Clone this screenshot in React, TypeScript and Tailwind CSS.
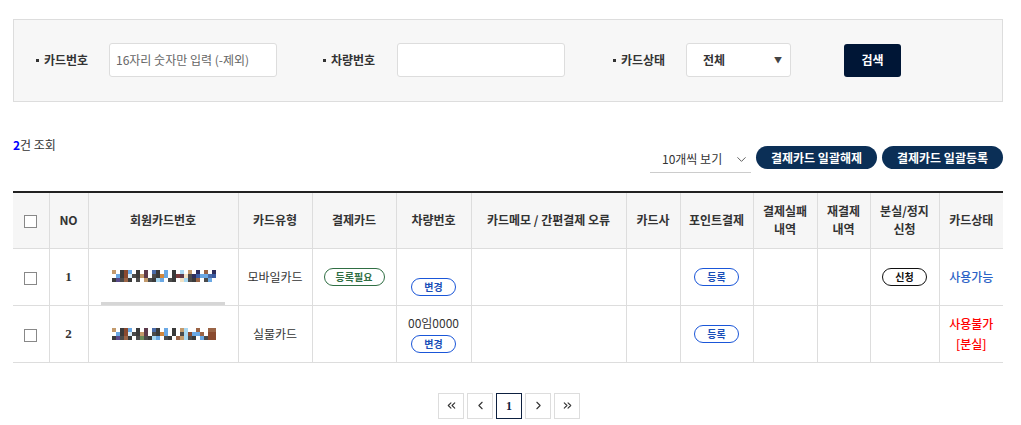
import React from "react";
import { ChevronDown, ChevronLeft, ChevronRight, ChevronsLeft, ChevronsRight } from "lucide-react";

const PAL: Record<string, string> = {
  t: "#c39a6c", w: "#ffffff", d: "#3a3a3a", r: "#8a4a2f", b: "#6aa8e4", l: "#d6ecfa",
  g: "#4b4b4b", m: "#5c3a4b", u: "#4a6ba8", o: "#d4883c", s: "#a8d8f2", n: "#2e2e5c",
  k: "#9a6446", v: "#3a5aa0", c: "#f2e2c4", e: "#6a8a5a", p: "#7a3a3a", x: "#5a4a8a",
};

const M1 = [
  "twdrbwdwmwudwbwdwswtwnwkwn",
  "wbdrlgdtmwgdobwdpmcgnvbbuv",
  "dxgkdwgwtgdsbwgdwcsgdkwgbw",
];
const M2 = [
  "twdrbwdwmwudwbwdwtswwkwwkk",
  "wbdrlgdtmwgdobwdwgsrbbkwrr",
  "dxgkdwgegdsbwgdwktsgdwbgrr",
];

function Mosaic({ rows }: { rows: string[] }) {
  return (
    <svg width={104} height={12} viewBox="0 0 104 12" className="block">
      {rows.map((row, y) =>
        row.split("").map((ch, x) => (
          <rect key={`${x}-${y}`} x={x * 4} y={y * 4} width={4} height={4} fill={PAL[ch] || "#fff"} />
        ))
      )}
    </svg>
  );
}

function Label({ text, w }: { text: string; w: string }) {
  return (
    <div className={`flex items-center ${w}`}>
      <span className="w-[3px] h-[3px] bg-[#333] mr-[5px]" />
      <span className="text-[12px] font-bold text-[#333]">{text}</span>
    </div>
  );
}

function Pill({ text, cls }: { text: string; cls: string }) {
  return (
    <span className={`inline-flex items-center justify-center h-[18px] rounded-full border text-[10px] font-bold leading-none bg-white ${cls}`}>
      {text}
    </span>
  );
}

const cols = [36, 39, 150, 74, 84, 75, 155, 54, 73, 64, 53, 69, 64];

function Checkbox() {
  return <span className="inline-block w-[13px] h-[13px] border border-[#888] bg-white align-middle" />;
}

export default function App() {
  const th = "border-l border-[#ddd] first:border-l-0 text-[12px] font-bold text-[#333] text-center align-middle leading-[18px]";
  const td = "border-l border-[#ddd] first:border-l-0 text-[12px] text-[#333] text-center align-middle";
  return (
    <div
      className="w-[1021px] h-[425px] bg-white px-[13px] pt-[19px] overflow-hidden"
      style={{ fontFamily: '"Noto Sans CJK KR", "Noto Sans", sans-serif' }}
    >
      {/* search panel */}
      <div className="w-[990px] h-[83px] bg-[#f7f7f7] border border-[#ddd] flex items-center pl-[22px] pb-[1px]">
        <Label text="카드번호" w="w-[73px]" />
        <div className="w-[168px] h-[34px] bg-white border border-[#ddd] rounded-[3px] flex items-center px-[6px] text-[12px] text-[#666]">
          16자리 숫자만 입력 (-제외)
        </div>
        <div className="ml-[46px]">
          <Label text="차량번호" w="w-[74px]" />
        </div>
        <div className="w-[168px] h-[34px] bg-white border border-[#ddd] rounded-[3px]" />
        <div className="ml-[48px]">
          <Label text="카드상태" w="w-[73px]" />
        </div>
        <div className="w-[105px] h-[34px] bg-white border border-[#ddd] rounded-[3px] flex items-center justify-between pl-[16px] pr-[8px] text-[12px] font-bold text-[#333]">
          <span>전체</span>
          <span className="text-[8px] text-[#444]">▼</span>
        </div>
        <div className="ml-[53px] w-[57px] h-[33px] bg-[#001636] rounded-[3px] flex items-center justify-center text-white text-[12px] font-bold">
          검색
        </div>
      </div>

      {/* count + controls */}
      <div className="w-[990px] flex justify-between items-start h-[89px]">
        <div className="mt-[35px] text-[12px] text-[#333] leading-[16px]">
          <span className="text-[#0000ff] font-bold">2</span>건 조회
        </div>
        <div className="flex items-start mt-[44px]">
          <div className="w-[101px] h-[27px] border-b border-[#ccc] flex items-center justify-between pl-[12px] pr-[2px] text-[12px] text-[#333]">
            <span>10개씩 보기</span>
            <ChevronDown size={15} strokeWidth={1.5} color="#555" />
          </div>
          <div className="ml-[5px] w-[121px] h-[23px] rounded-full bg-[#0b2f56] text-white text-[12px] font-bold flex items-center justify-center">
            결제카드 일괄해제
          </div>
          <div className="ml-[5px] w-[121px] h-[23px] rounded-full bg-[#0b2f56] text-white text-[12px] font-bold flex items-center justify-center">
            결제카드 일괄등록
          </div>
        </div>
      </div>

      {/* table */}
      <table className="table-fixed border-collapse w-[990px]">
        <colgroup>
          {cols.map((w, i) => (
            <col key={i} style={{ width: w }} />
          ))}
        </colgroup>
        <thead>
          <tr className="h-[56px] bg-[#f6f6f6] border-t-[2px] border-t-[#222] border-b border-b-[#ddd]">
            <th className={th}><Checkbox /></th>
            <th className={th}>NO</th>
            <th className={th}>회원카드번호</th>
            <th className={th}>카드유형</th>
            <th className={th}>결제카드</th>
            <th className={th}>차량번호</th>
            <th className={th}>카드메모 / 간편결제 오류</th>
            <th className={th}>카드사</th>
            <th className={th}>포인트결제</th>
            <th className={th}>결제실패<br />내역</th>
            <th className={th}>재결제<br />내역</th>
            <th className={th}>분실/정지<br />신청</th>
            <th className={th}>카드상태</th>
          </tr>
        </thead>
        <tbody>
          <tr className="h-[56px] border-b border-[#ddd]">
            <td className={td}><Checkbox /></td>
            <td className={`${td} text-[13px] font-bold`} style={{ fontFamily: '"Liberation Serif", serif' }}>1</td>
            <td className={`${td} align-top`}>
              <div className="flex flex-col items-center">
                <div className="mt-[21px] ml-[2px]"><Mosaic rows={M1} /></div>
                <div className="mt-[20px] ml-[-1px] w-[124px] h-[3px] bg-[#d6d6d6]" />
              </div>
            </td>
            <td className={td}>모바일카드</td>
            <td className={td}><Pill text="등록필요" cls="w-[61px] border-[#2f6e43] text-[#2f6e43]" /></td>
            <td className={td}>
              <div className="flex justify-center pt-[20px]">
                <Pill text="변경" cls="w-[45px] border-[#1a56d8] text-[#1a4fb8]" />
              </div>
            </td>
            <td className={td}></td>
            <td className={td}></td>
            <td className={td}><Pill text="등록" cls="w-[45px] border-[#1a56d8] text-[#1a4fb8]" /></td>
            <td className={td}></td>
            <td className={td}></td>
            <td className={td}><Pill text="신청" cls="w-[45px] border-[#111] text-[#111]" /></td>
            <td className={td}><span className="text-[#2a62c6] font-medium text-[12px]">사용가능</span></td>
          </tr>
          <tr className="h-[57px] border-b border-[#ddd]">
            <td className={td}><Checkbox /></td>
            <td className={`${td} text-[13px] font-bold`} style={{ fontFamily: '"Liberation Serif", serif' }}>2</td>
            <td className={td}>
              <div className="flex justify-center ml-[2px]"><Mosaic rows={M2} /></div>
            </td>
            <td className={td}>실물카드</td>
            <td className={td}></td>
            <td className={td}>
              <div className="flex flex-col items-center">
                <span className="leading-[16px] mb-[4px]">00임0000</span>
                <Pill text="변경" cls="w-[45px] border-[#1a56d8] text-[#1a4fb8]" />
              </div>
            </td>
            <td className={td}></td>
            <td className={td}></td>
            <td className={td}><Pill text="등록" cls="w-[45px] border-[#1a56d8] text-[#1a4fb8]" /></td>
            <td className={td}></td>
            <td className={td}></td>
            <td className={td}></td>
            <td className={td}><span className="text-[#ff0000] font-medium leading-[20px] inline-block">사용불가<br />[분실]</span></td>
          </tr>
        </tbody>
      </table>

      {/* pagination */}
      <div className="flex justify-center gap-[3px] mt-[30px] ml-[-3px]">
        <div className="w-[26px] h-[26px] border border-[#ddd] flex items-center justify-center"><ChevronsLeft size={13} strokeWidth={2} color="#333" /></div>
        <div className="w-[26px] h-[26px] border border-[#ddd] flex items-center justify-center"><ChevronLeft size={13} strokeWidth={2} color="#333" /></div>
        <div className="w-[26px] h-[26px] border border-[#0d2040] flex items-center justify-center text-[12px] font-bold text-[#0d2040]" style={{ fontFamily: '"Liberation Serif", serif' }}>1</div>
        <div className="w-[26px] h-[26px] border border-[#ddd] flex items-center justify-center"><ChevronRight size={13} strokeWidth={2} color="#333" /></div>
        <div className="w-[26px] h-[26px] border border-[#ddd] flex items-center justify-center"><ChevronsRight size={13} strokeWidth={2} color="#333" /></div>
      </div>
    </div>
  );
}
